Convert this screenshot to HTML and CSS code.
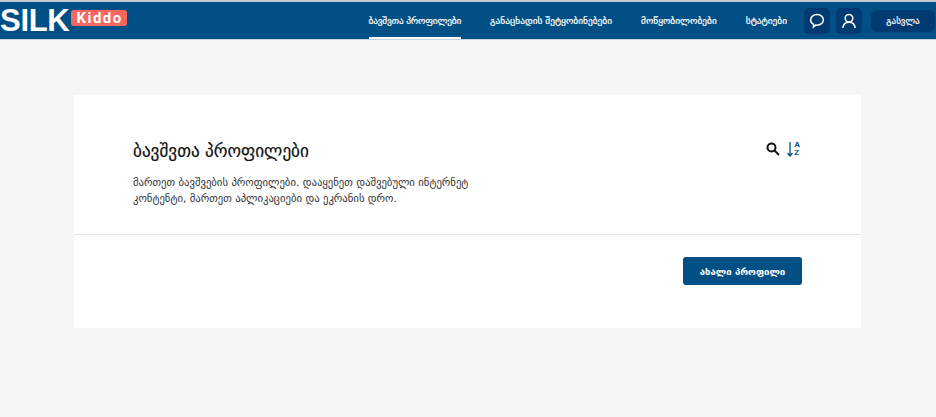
FILE: index.html
```html
<!DOCTYPE html>
<html lang="ka">
<head>
<meta charset="utf-8">
<title>ბავშვთა პროფილები</title>
<link rel="stylesheet" href="styles.css">
</head>
<body>
<header class="header">
  <div class="logo">
    <span class="logo-silk">SILK</span>
    <span class="logo-kiddo">Kiddo</span>
  </div>
  <nav class="nav">
    <a class="nav-link nav-active">ბავშვთა პროფილები</a>
    <a class="nav-link">განაცხადის შეტყობინებები</a>
    <a class="nav-link">მოწყობილობები</a>
    <a class="nav-link">სტატიები</a>
  </nav>
  <div class="actions">
    <span class="icon-btn">
      <svg width="16" height="16" viewBox="0 0 16 16" fill="none" stroke="#fff" stroke-width="1.5"><path d="M8 1.600c3.600 0 6.400 2.300 6.400 5.300S11.600 12.200 8 12.200c-.4 0-.9 0-1.300-.1L4.400 14l.2-2.700C2.800 10.400 1.600 8.800 1.600 6.900 1.600 3.900 4.400 1.600 8 1.600z"/></svg>
    </span>
    <span class="icon-btn">
      <svg width="16" height="16" viewBox="0 0 16 16" fill="none" stroke="#fff" stroke-width="1.5"><circle cx="8" cy="5.200" r="3.800"/><path d="M1.800 15c.4-3.600 2.800-5.800 6.200-5.800s5.800 2.200 6.200 5.800"/></svg>
    </span>
    <a class="logout">გასვლა</a>
  </div>
</header>
<main class="main">
  <section class="card">
    <div class="card-top">
      <div class="card-text">
        <h1 class="title">ბავშვთა პროფილები</h1>
        <p class="desc">მართეთ ბავშვების პროფილები. დააყენეთ დაშვებული ინტერნეტ კონტენტი, მართეთ აპლიკაციები და ეკრანის დრო.</p>
      </div>
      <div class="tools">
        <svg class="search" width="14" height="14" viewBox="0 0 14 14" fill="none" stroke="#111" stroke-width="2"><circle cx="5.500" cy="5.500" r="4"/><path d="M8.500 8.500l4.500 4.500"/></svg>
        <span class="sort">
          <svg width="6" height="15" viewBox="0 0 6 15" fill="none" stroke="#004f85" stroke-width="1.300"><path d="M3 0v13.500M.6 11l2.400 3 2.400-3"/></svg>
          <span class="sort-letters"><span>A</span><span>Z</span></span>
        </span>
      </div>
    </div>
    <div class="card-bottom">
      <a class="primary">ახალი პროფილი</a>
    </div>
  </section>
</main>
</body>
</html>
```
FILE: styles.css
```css
* { box-sizing: border-box; }
html, body { margin: 0; height: 100%; }
body {
  background: #f6f6f6;
  font-family: "DejaVu Sans", sans-serif;
  overflow: hidden;
}
.header {
  height: 40px;
  background: #004f85;
  border-top: 2px solid #c4ccd2;
  border-bottom: 1px solid #c9d6df;
  display: flex;
  align-items: center;
  justify-content: space-between;
  padding-right: 1px;
}
.logo { display: flex; align-items: flex-start; height: 100%; }
.logo-silk {
  font-family: "Liberation Sans", sans-serif;
  font-weight: 700;
  font-size: 31px;
  line-height: 30px;
  color: #fff;
  margin-top: 4px;
  letter-spacing: -0.300px;
}
.logo-kiddo {
  background: #f9665f;
  color: #fff;
  font-family: Roboto, sans-serif;
  font-weight: 700;
  font-size: 15px;
  line-height: 16px;
  letter-spacing: 1.500px;
  padding: 0 4px 0 5px;
  border-radius: 3px;
  margin: 8px 0 0 2px;
}
.nav {
  display: flex;
  gap: 29px;
  margin-left: auto;
  margin-right: 17px;
  align-self: stretch;
}
.nav-link {
  font-size: 9.400px;
  color: #fff;
  display: flex;
  align-items: center;
  white-space: nowrap;
  padding-bottom: 1px;
  -webkit-text-stroke: 0.2px #fff;
}
.nav-active {
  box-shadow: inset 0 -2px 0 #fff;
  letter-spacing: -0.200px;
}
.actions { display: flex; align-items: center; gap: 6px; }
.icon-btn {
  width: 26px;
  height: 26px;
  border-radius: 5px;
  background: #003a70;
  display: flex;
  align-items: center;
  justify-content: center;
}
.logout {
  width: 64px;
  height: 22px;
  margin-left: 3px;
  border-radius: 6px;
  background: #003a70;
  color: #fff;
  font-size: 9px;
  -webkit-text-stroke: 0.2px #fff;
  display: flex;
  align-items: center;
  justify-content: center;
}
.main { padding: 55px 75px 0 74px; }
.card { background: #fff; height: 233px; }
.card-top {
  height: 140px;
  border-bottom: 1px solid #e6e6e6;
  padding: 46px 61px 0 59px;
  display: flex;
  justify-content: space-between;
  align-items: flex-start;
}
.card-text { width: 345px; }
.title {
  margin: 0 0 14px;
  font-size: 17.200px;
  line-height: 20px;
  font-weight: 400;
  color: #111;
  -webkit-text-stroke: 0.2px #111;
}
.desc {
  margin: 0;
  font-size: 10.700px;
  line-height: 16px;
  color: #333;
}
.tools { display: flex; align-items: center; gap: 7px; }
.search { display: block; }
.sort { display: flex; align-items: center; gap: 1px; }
.sort svg { display: block; }
.sort-letters {
  display: flex;
  flex-direction: column;
  font-family: "Liberation Sans", sans-serif;
  font-size: 8px;
  font-weight: 700;
  line-height: 8px;
  color: #004f85;
}
.card-bottom {
  display: flex;
  justify-content: flex-end;
  padding: 22px 59px 0 0;
}
.primary {
  width: 119px;
  height: 28px;
  background: #004f85;
  color: #fff;
  font-size: 9.600px;
  font-weight: 700;
  border-radius: 3px;
  display: flex;
  align-items: center;
  justify-content: center;
}
```
